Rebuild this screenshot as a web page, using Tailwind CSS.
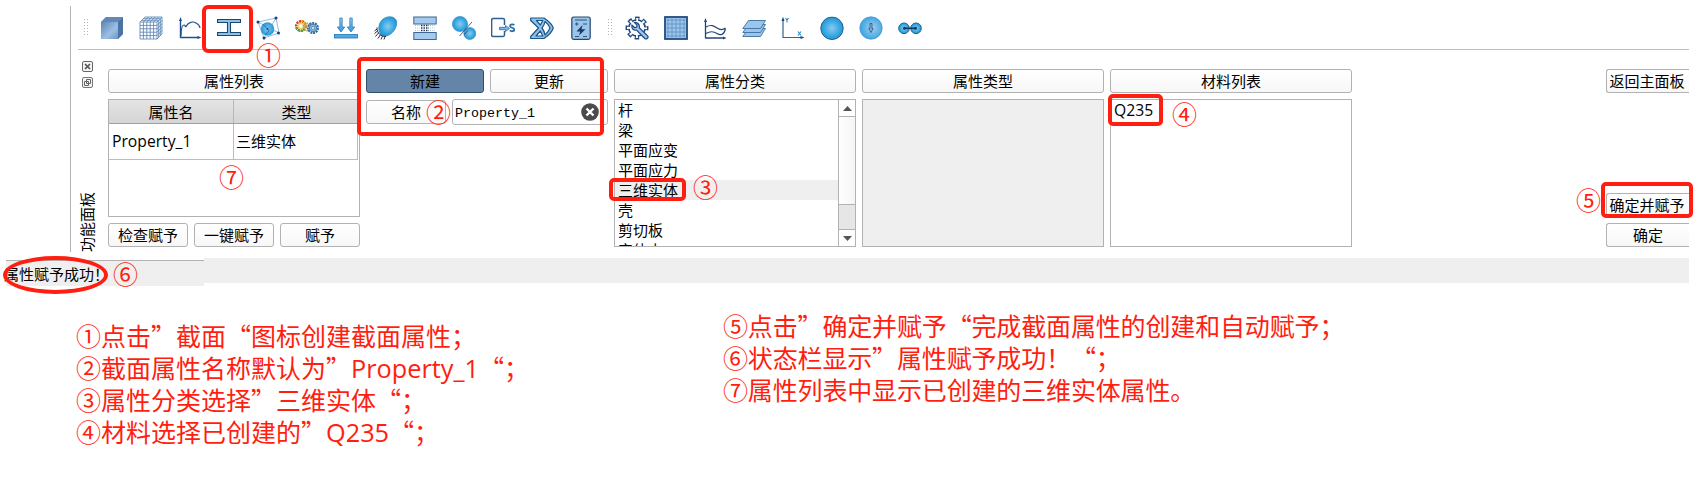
<!DOCTYPE html>
<html lang="zh-CN">
<head>
<meta charset="utf-8">
<title>截面属性</title>
<script src="https://cdn.jsdelivr.net/npm/@tailwindcss/browser@4"></script>
</head>
<body class="relative h-[480px] w-[1699px] overflow-hidden bg-white font-['Noto_Sans_CJK_SC',sans-serif] text-[15px] leading-5 text-black">
<svg class="absolute h-0 w-0">
  <defs>
    <linearGradient id="face" x1="0" y1="0" x2="1" y2="1"><stop offset="0" stop-color="#5d83b3"/><stop offset=".6" stop-color="#9dc0e6"/><stop offset="1" stop-color="#6c93c2"/></linearGradient>
    <radialGradient id="ball" cx=".5" cy=".5" r=".55"><stop offset="0" stop-color="#8cc8f2"/><stop offset=".7" stop-color="#2fa5e0"/><stop offset="1" stop-color="#2493d0"/></radialGradient>
    <radialGradient id="soft" cx=".55" cy=".5" r=".6"><stop offset="0" stop-color="#a5cdf0"/><stop offset="1" stop-color="#2d9fde"/></radialGradient>
    <linearGradient id="arrow" x1="0" y1="0" x2="0" y2="1"><stop offset="0" stop-color="#9cd0f5"/><stop offset="1" stop-color="#2f95dc"/></linearGradient>
    <pattern id="dots" width="3" height="3" patternUnits="userSpaceOnUse"><rect width="1" height="1" fill="#b4b4b4"/></pattern>
  </defs>
</svg>

<main class="flex h-[252px] flex-col pl-[70px] pt-[6px] pr-[10px]">
  <div class="flex flex-1 flex-col border-l border-[#b4b4b4]">
    <!-- toolbar -->
    <div class="ml-[7px] flex h-[44px] items-center border-b border-[#bdbdbd] pl-[6px]">
      <svg class="mr-[11px] h-[18px] w-[5px]"><rect width="5" height="18" fill="url(#dots)"/></svg>
      <div class="flex gap-[15.08px]">
        <svg class="size-6" viewBox="0 0 24 24"><path d="M1 6 6 1h17v17l-5 5H1z" fill="#7fa4d0"/><path d="M1 6 6 1h17l-5 5z" fill="#6288b8"/><path d="M18 6l5-5v17l-5 5z" fill="#4c73a5"/><path d="M1 6h17v17H1z" fill="url(#face)"/></svg>
        <svg class="size-6" viewBox="0 0 24 24"><path d="M1 6 6 1h17v17l-5 5H1z" fill="#fff"/><path d="M1 6h17v17H1zM1 9.4h17M1 12.8h17M1 16.2h17M1 19.6h17M4.4 6v17M7.8 6v17M11.2 6v17M14.6 6v17M1 6 6 1h17l-5 5M4.4 6l5-5M7.8 6l5-5M11.2 6l5-5M14.6 6l5-5M2.7 4.3h17M4.3 2.7h17M23 1v17l-5 5M19.7 4.3v17M21.3 2.7v17M18 9.4l5-5M18 12.8l5-5M18 16.2l5-5M18 19.6l5-5" stroke="#5b84b4" fill="none" stroke-width=".85"/></svg>
        <svg class="size-6" viewBox="0 0 24 24" fill="none" stroke="#1f4f8a"><path d="M2.5 22V4M2.5 21.5H21" stroke-width="1.4"/><path d="M2.5 1 1 5h3zM23.5 21.5l-4-1.6v3.2z" fill="#1f4f8a" stroke="none"/><path d="M3 20C3 12 4 9 6 9c1.500 0 1 2 2 1.500C10 6 15 5 18 7c2 1 3.500 1.500 4 5" stroke-width="1.2"/></svg>
        <svg class="size-6" viewBox="0 0 24 24"><path d="M.5 3.500h23v3h-10v10h10v3H.5v-3h10v-10H.5z" fill="#8fc0ea" stroke="#174a72" stroke-width="1.1"/></svg>
        <svg class="size-6" viewBox="0 0 24 24"><circle cx="11.500" cy="13" r="6.800" fill="url(#ball)"/><path d="M2 6 20 2l3 15L8 22zM2 6l21 11M20 2 8 22" stroke="#6e9cc7" stroke-width=".7" fill="none"/><path d="M7 8l6 7-4 4" stroke="#1d6fb0" stroke-width=".8" fill="none"/><g fill="#1b3f77"><circle cx="2" cy="6" r="1.500"/><circle cx="20" cy="2" r="1.500"/><circle cx="22.500" cy="17" r="1.500"/><circle cx="8" cy="22" r="1.500"/><circle cx="11.500" cy="13" r="1"/></g></svg>
        <svg class="size-6" viewBox="0 0 24 24" fill="none"><circle cx="6" cy="10" r="4.700" stroke="#d43b22" stroke-width="2.600" stroke-dasharray="2 .8"/><path d="M6 5.300A4.700 4.700 0 0 1 10 12" stroke="#e6b71e" stroke-width="2.600" stroke-dasharray="2 .8"/><path d="M1.600 11.500A4.700 4.700 0 0 0 8 14.400" stroke="#55a444" stroke-width="2.600" stroke-dasharray="2 .8"/><circle cx="6" cy="10" r="2.600" stroke="#f2d36a" stroke-width="1.500"/><circle cx="12" cy="11" r="3.600" stroke="#8cbc4e" stroke-width="2"  stroke-dasharray="1.500 .8"/><circle cx="18" cy="12" r="4.700" stroke="#356b9c" stroke-width="2.600" stroke-dasharray="1.900 .7"/><circle cx="18" cy="12" r="3.700" fill="#8db9df" stroke="#4a82b5"/><circle cx="18" cy="12" r="1.500" fill="#fff" stroke="#356b9c" stroke-width=".7"/></svg>
        <svg class="size-6" viewBox="0 0 24 24"><rect x=".5" y="18.500" width="23" height="3.500" fill="#55a9e2" stroke="#1c76bb" stroke-width=".8"/><path d="M5.800 2h2.400v9h2.500L7 16l-3.700-5h2.500zM15.800 2h2.400v9h2.500L17 16l-3.700-5h2.500z" fill="url(#arrow)" stroke="#2a7cb9" stroke-width=".8"/></svg>
        <svg class="size-6" viewBox="0 0 24 24"><path d="M8 4c5-5 13-4 14.500 1S19 19 12 20 2 10 8 4z" fill="url(#ball)" stroke="#2a86c4" stroke-width=".7"/><path d="M3 11.500c0 6 4 9 9 9M3 13l-2.500 2M3.500 15 .5 17.500M4.500 17l-3 3.500M6.500 18.500l-2.500 4M8.500 20l-1.500 3.500M11 20.500l-1 3" stroke="#1f3352" stroke-width="1" fill="none"/></svg>
        <svg class="size-6" viewBox="0 0 24 24"><g fill="#a4cbee" stroke="#3b6791"><rect x=".8" y="1" width="22.400" height="7"/><rect x=".8" y="16.500" width="22.400" height="7"/></g><path d="M8 9.500h8M8 12h8M8 14.500h8" stroke="#162d4f" stroke-width="1.300" stroke-dasharray="1.400 1.100"/><path d="M2 9.500h5M2 12h5M2 14.500h5M17 9.500h5M17 12h5M17 14.500h5" stroke="#9fb3c7" stroke-width=".8" stroke-dasharray="1 1.200"/></svg>
        <svg class="size-6" viewBox="0 0 24 24"><circle cx="8" cy="8" r="7.600" fill="url(#ball)" stroke="#2a86c4" stroke-width=".6"/><circle cx="17.800" cy="17.500" r="6" fill="url(#ball)" stroke="#2a86c4" stroke-width=".6"/><path d="M7.500 20 20 6M12 19l4-4.500" stroke="#34536e" stroke-width=".9"/></svg>
        <svg class="size-6" viewBox="0 0 24 24"><path d="M13.500 9V4.200Q13.500 2.500 12 2.500H2Q.6 2.500.6 4.200v14.600Q.6 20.500 2 20.500h10q1.500 0 1.500-1.700V15" fill="none" stroke="#2e5f8d" stroke-width="1.500"/><path d="M8.500 11.300h6V9.500l4 3-4 3v-1.800h-6z" fill="#7fb4e2" stroke="#2e6da4" stroke-width=".8"/><path d="M23.300 9c-1.200-1-4.300-.9-4.300 1 0 2 4.300 1.500 4.300 3.600 0 2-3 2-4.600.8" fill="none" stroke="#2e6da4" stroke-width="1.800"/></svg>
        <svg class="size-6" viewBox="0 0 24 24" stroke="#1b5687" stroke-width="1.200" stroke-linejoin="round"><path d="M.7 2H14c4.500 3 8 6 9.300 10-1.300 4-4.800 7.500-9.300 10.500H.7v-2L8.500 12 .7 4.500z" fill="#8fc0ea"/><path d="M6.500 4.500h6.300L10.300 9zM15 5.500c2.500 2 4 4 5 6.500-1 2.500-2.500 4.700-5 7-.5-3-1.300-5-3-7 1.700-2 2.500-3.500 3-6.500zM10.300 15l2.500 5H6z" fill="#fff"/></svg>
        <svg class="size-6" viewBox="0 0 24 24"><rect x="2.800" y="1" width="18.400" height="22.400" rx="1.800" fill="#9cc5ec" stroke="#27486c" stroke-width="1.200"/><path d="M6 4h12M6 20.500h4M14 20.500h4M6 8h3.500M7.700 6.500v3M14 8h4" stroke="#2d5680" stroke-width="1.200"/><path d="M13.500 9 7.500 15.500h3.700L10 19.500l6.500-6.300h-4z" fill="#17395f"/></svg>
      </div>
      <svg class="ml-[15px] mr-[12px] h-[18px] w-[5px]"><rect width="5" height="18" fill="url(#dots)"/></svg>
      <div class="flex gap-[15px]">
        <svg class="size-6" viewBox="0 0 24 24"><circle cx="12" cy="12" r="9.600" fill="none" stroke="#234a7c" stroke-width="3.800" stroke-dasharray="4.300 3.240" stroke-dashoffset="2.150"/><circle cx="12" cy="12" r="9" fill="#234a7c"/><circle cx="12" cy="12" r="8.400" fill="none" stroke="#fff" stroke-width="3.200" stroke-dasharray="2 4.597" stroke-dashoffset="1"/><circle cx="12" cy="12" r="7.300" fill="#fff"/><path d="M9.500 6.500 12 9l-.3 2.200-2.200.3L7 9.200c-.7 3 1.200 5.500 4.500 5l8.300 8.300c1.800 1.300 4.200-1 2.800-2.700l-8.300-8c.7-3-1.800-6-4.800-5.300z" fill="#9cc5ec" stroke="#234a7c" stroke-width="1.200"/></svg>
        <svg class="size-6" viewBox="0 0 24 24"><rect x="1" y="1" width="22" height="22" fill="#9cc5ec" stroke="#234a7c" stroke-width="1.800"/><path d="M4 2.500v19M8 2.500v19M12 2.500v19M16 2.500v19M20 2.500v19M2.500 4h19M2.500 8h19M2.500 12h19M2.500 16h19M2.500 20h19" stroke="#5e8fbf" stroke-width=".8"/></svg>
        <svg class="size-6" viewBox="0 0 24 24" fill="none" stroke="#1f4776"><path d="M2.500 22.500V5M2.500 22H21" stroke-width="1.300"/><path d="M2.500 2 1 6h3zM23.500 22l-3.500-1.500v3z" fill="#1f4776" stroke="none"/><path d="M3 11c5-3 8-1 11 1s6 2 8.500 0M3 17.500c5-3 8-2 11 0s7 2 8.500-5" stroke-width="1.200"/></svg>
        <svg class="size-6" viewBox="0 0 24 24" fill="#9cc5ec" stroke="#3b6f9f" stroke-width=".9"><path d="M6.500 12.500h17l-5 8H.8z"/><path d="M6.500 8.500h17l-5 8H.8z"/><path d="M6.500 4.500h17l-5 8H.8z"/></svg>
        <svg class="size-6" viewBox="0 0 24 24"><path d="M2 3v18.500h19" stroke="#33639a" stroke-width="1.200" fill="none"/><path d="M2 .8.5 5h3zM23.500 21.500l-4-1.500v3z" fill="#1f4776"/><path d="M4.500 2.200 6 4.200l1.500-2M6 4.200V6.500M17 15.500l3 4M20 15.500l-3 4" stroke="#2d87c9" stroke-width="1.100" fill="none"/></svg>
        <svg class="size-6" viewBox="0 0 24 24"><circle cx="12" cy="12.300" r="11.200" fill="url(#ball)" stroke="#235f91"/></svg>
        <svg class="size-6" viewBox="0 0 24 24"><circle cx="12" cy="12" r="11.200" fill="url(#soft)" stroke="#3f97d4" stroke-width=".7"/><path d="M11 7.500h2v5h1.200L12 16.500l-2.200-4H11z" fill="#7fb3df" stroke="#2c5682" stroke-width=".8"/></svg>
        <svg class="size-6" viewBox="0 0 24 24"><circle cx="6" cy="12.300" r="5.300" fill="url(#ball)" stroke="#1e5f93"/><circle cx="18" cy="12.300" r="5.300" fill="url(#ball)" stroke="#1e5f93"/><path d="M6 12.300h12" stroke="#173a5c" stroke-width="1.500"/><circle cx="6.500" cy="12.300" r="1.500" fill="#173a5c"/><circle cx="17.500" cy="12.300" r="1.500" fill="#173a5c"/></svg>
      </div>
    </div>

    <div class="flex flex-1">
      <!-- dock title strip -->
      <div class="flex w-[37px] flex-col pl-[11px] pt-[11px]">
        <svg class="size-[11px]" viewBox="0 0 11 11"><rect x=".5" y=".5" width="10" height="10" rx="1.500" fill="#f4f4f4" stroke="#666"/><path d="M3 3l5 5M8 3 3 8" stroke="#555" stroke-width="1.700"/></svg>
        <svg class="mt-[5px] size-[11px]" viewBox="0 0 11 11"><rect x=".5" y=".5" width="10" height="10" rx="1.500" fill="#f4f4f4" stroke="#777"/><path d="M4.500 2.500h4v4h-4zM2.500 4.500h4v4h-4z" fill="#f4f4f4" stroke="#666"/></svg>
        <div class="-ml-[5px] mt-auto h-[60px] w-5 rotate-180 text-[15px] whitespace-nowrap [writing-mode:vertical-rl]"><span class="[text-orientation:sideways]">功能面板</span></div>
      </div>

      <div class="flex flex-1 gap-[6px] pt-[19px]">
        <section class="flex w-[252px] flex-col gap-[6px]">
          <div class="h-6 rounded-[3px] border border-[#b2b2b2] bg-linear-to-b from-white to-[#f7f7f7] text-center leading-[21px]">属性列表</div>
          <div class="h-[118px] border border-[#b2b2b2]">
            <div class="grid h-6 grid-cols-[125px_1fr] border-b border-[#a0a0a0] bg-linear-to-b from-[#e4e4e4] to-[#d5d5d5] text-center leading-[23px]"><span class="border-r border-[#b8b8b8]">属性名</span><span>类型</span></div>
            <div class="mr-[1px] grid h-[36px] grid-cols-[125px_1fr] border-r border-b border-[#bcbcbc] leading-[34px]"><span class="border-r border-[#bcbcbc] pl-[3px] font-['Open_Sans'] text-[15.700px]">Property_1</span><span class="pl-[2px]">三维实体</span></div>
          </div>
          <div class="grid h-6 grid-cols-3 gap-[6px] text-center leading-[21px]">
            <div class="rounded-[3px] border border-[#b2b2b2] bg-linear-to-b from-white to-[#f7f7f7]">检查赋予</div>
            <div class="rounded-[3px] border border-[#b2b2b2] bg-linear-to-b from-white to-[#f7f7f7]">一键赋予</div>
            <div class="rounded-[3px] border border-[#b2b2b2] bg-linear-to-b from-white to-[#f7f7f7]">赋予</div>
          </div>
        </section>

        <section class="flex w-[242px] flex-col gap-[6px]">
          <div class="grid h-6 grid-cols-2 gap-[6px] text-center leading-[21px]">
            <div class="rounded-[3px] border border-[#2f4f70] bg-[#6485a8]">新建</div>
            <div class="rounded-[3px] border border-[#b2b2b2] bg-linear-to-b from-white to-[#f7f7f7]">更新</div>
          </div>
          <div class="flex h-[26px] items-center gap-[6px]">
            <div class="h-6 w-20 rounded-[3px] border border-[#b2b2b2] bg-linear-to-b from-white to-[#f7f7f7] text-center leading-[21px]">名称</div>
            <div class="flex h-[26px] flex-1 items-center justify-between rounded-[3px] border border-[#b2b2b2] pr-[8px] pl-[2px]">
              <span class="pt-[3px] font-['Liberation_Mono',monospace] text-[13.330px]">Property_1</span>
              <svg class="size-[18px]" viewBox="0 0 18 18"><circle cx="9" cy="9" r="8.800" fill="#4b4b4b"/><path d="M5.500 5.500l7 7M12.500 5.500l-7 7" stroke="#fff" stroke-width="2.400"/></svg>
            </div>
          </div>
        </section>

        <section class="flex w-[242px] flex-col gap-[6px]">
          <div class="h-6 rounded-[3px] border border-[#b2b2b2] bg-linear-to-b from-white to-[#f7f7f7] text-center leading-[21px]">属性分类</div>
          <div class="flex h-[148px] border border-[#b2b2b2]">
            <ul class="flex-1 overflow-hidden leading-[20px] *:h-5 *:pl-[3px]">
              <li>杆</li><li>梁</li><li>平面应变</li><li>平面应力</li><li class="bg-[#efefef]">三维实体</li><li>壳</li><li>剪切板</li><li>实体占</li>
            </ul>
            <div class="flex w-[17px] flex-col border-l border-[#b2b2b2]">
              <div class="flex h-[17px] items-center justify-center border-b border-[#b2b2b2]"><svg class="h-[5px] w-[9px]"><path d="M0 5 4.500 0 9 5z" fill="#555"/></svg></div>
              <div class="h-[88px] border-b border-[#b2b2b2] bg-linear-to-r from-white to-[#f5f5f5]"></div>
              <div class="flex-1 bg-[#e6e6e6]"></div>
              <div class="flex h-[17px] items-center justify-center border-t border-[#b2b2b2]"><svg class="h-[5px] w-[9px]"><path d="M0 0 4.500 5 9 0z" fill="#555"/></svg></div>
            </div>
          </div>
        </section>

        <section class="flex w-[242px] flex-col gap-[6px]">
          <div class="h-6 rounded-[3px] border border-[#b2b2b2] bg-linear-to-b from-white to-[#f7f7f7] text-center leading-[21px]">属性类型</div>
          <div class="h-[148px] border border-[#b2b2b2] bg-[#efefef]"></div>
        </section>

        <section class="flex w-[242px] flex-col gap-[6px]">
          <div class="h-6 rounded-[3px] border border-[#b2b2b2] bg-linear-to-b from-white to-[#f7f7f7] text-center leading-[21px]">材料列表</div>
          <div class="h-[148px] border border-[#b2b2b2] pl-[3px] font-['Open_Sans'] text-[15.700px]">Q235</div>
        </section>

        <section class="ml-auto flex h-[178px] w-[83px] flex-col text-center leading-[21px] whitespace-nowrap">
          <div class="h-6 rounded-l-[3px] border border-r-0 border-[#b2b2b2] bg-linear-to-b from-white to-[#f7f7f7] pr-[2px]">返回主面板</div>
          <div class="mt-auto h-6 rounded-l-[3px] border border-r-0 border-[#b2b2b2] bg-linear-to-b from-white to-[#f7f7f7] pr-[2px]">确定并赋予</div>
          <div class="mt-[6px] h-6 rounded-l-[3px] border border-r-0 border-[#b2b2b2] bg-linear-to-b from-white to-[#f7f7f7]">确定</div>
        </section>
      </div>
    </div>
  </div>
</main>

<!-- status bar -->
<footer class="flex pt-[6px] pr-[10px] pl-[6px]">
  <div class="mt-[2px] h-[26px] w-[198px] border-t border-[#b2b2b2] bg-[#efefef] leading-[25px]"><span class="-ml-[2px]">属性赋予成功！</span></div>
  <div class="h-[25px] flex-1 bg-[#efefef]"></div>
</footer>

<!-- explanatory notes -->
<div class="flex justify-between pr-[362px] pl-[76px] text-[25px] whitespace-nowrap text-[#ff1e0f] *:*:h-[31.900px] *:*:leading-[31.900px]">
  <div class="pt-[34px]">
    <p>①点击”截面“图标创建截面属性；</p>
    <p>②截面属性名称默认为”<span class="font-['Open_Sans'] text-[25.300px] leading-none">Property_1</span>“；</p>
    <p>③属性分类选择”三维实体“；</p>
    <p>④材料选择已创建的”<span class="font-['Open_Sans'] text-[25.300px] leading-none">Q235</span>“；</p>
  </div>
  <div class="w-[614px] pt-[24px] tracking-[-0.15px]">
    <p>⑤点击”确定并赋予“完成截面属性的创建和自动赋予；</p>
    <p>⑥状态栏显示”属性赋予成功！“；</p>
    <p>⑦属性列表中显示已创建的三维实体属性。</p>
  </div>
</div>

<!-- callouts -->
<div class="text-[25px] leading-[26px] text-[#ff1e0f]">
  <div class="absolute top-[5px] left-[202px] h-[48px] w-[51px] rounded-[6px] border-4 border-current"></div>
  <div class="absolute top-[57px] left-[357px] h-[79px] w-[247px] rounded-[5px] border-4 border-current"></div>
  <div class="absolute top-[178px] left-[609px] h-[23px] w-[77px] rounded-[5px] border-4 border-current"></div>
  <div class="absolute top-[94px] left-[1108px] h-[32px] w-[55px] rounded-[5px] border-4 border-current"></div>
  <div class="absolute top-[182px] left-[1601px] h-[36px] w-[92px] rounded-[5px] border-4 border-current"></div>
  <div class="absolute top-[256px] left-[3px] h-[38px] w-[105px] rounded-[50%] border-4 border-current"></div>
  <span class="absolute top-[41px] left-[256px]">①</span>
  <span class="absolute top-[98px] left-[426px]">②</span>
  <span class="absolute top-[173px] left-[693px]">③</span>
  <span class="absolute top-[100px] left-[1172px]">④</span>
  <span class="absolute top-[186px] left-[1576px]">⑤</span>
  <span class="absolute top-[260px] left-[113px]">⑥</span>
  <span class="absolute top-[163px] left-[219px]">⑦</span>
</div>
</body>
</html>
